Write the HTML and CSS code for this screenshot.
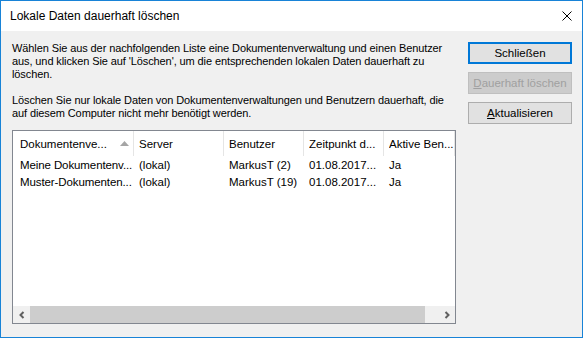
FILE: index.html
```html
<!doctype html>
<html lang="de">
  <head>
    <meta charset="UTF-8" />
    <title>Lokale Daten dauerhaft löschen</title>
    <link rel="stylesheet" href="styles.css">
  </head>
  <body>
    <div class="window">
      <div class="titlebar">
        <span class="title">Lokale Daten dauerhaft löschen</span>
        <button class="close" aria-label="Schließen">
          <svg width="10" height="10" viewBox="0 0 10 10">
            <path d="M0.5 0.5 L9.5 9.5 M9.5 0.5 L0.5 9.5" stroke="#000" stroke-width="1" fill="none" />
          </svg>
        </button>
      </div>

      <div class="content">
        <div class="main">
          <p class="intro">
            Wählen Sie aus der nachfolgenden Liste eine Dokumentenverwaltung und einen Benutzer<br>
            aus, und klicken Sie auf 'Löschen', um die entsprechenden lokalen Daten dauerhaft zu<br>
            löschen.
          </p>
          <p class="intro">
            Löschen Sie nur lokale Daten von Dokumentenverwaltungen und Benutzern dauerhaft, die<br>
            auf diesem Computer nicht mehr benötigt werden.
          </p>

          <div class="listview">
            <div class="grid">
              <!-- column titles are shown clipped, as the list view draws them -->
              <div class="head sorted" title="Dokumentenverwaltung">
                <span class="cell-text">Dokumentenve...</span>
                <svg class="sort-arrow" width="9" height="5" viewBox="0 0 9 5">
                  <path d="M0 5 L4.5 0 L9 5 Z" fill="#a5a5a5" />
                </svg>
              </div>
              <div class="head"><span class="cell-text">Server</span></div>
              <div class="head"><span class="cell-text">Benutzer</span></div>
              <div class="head" title="Zeitpunkt der letzten Verwendung"><span class="cell-text">Zeitpunkt d...</span></div>
              <div class="head" title="Aktive Benutzer"><span class="cell-text">Aktive Ben...</span></div>

              <div class="cell"><span class="cell-text">Meine Dokumentenv...</span></div>
              <div class="cell"><span class="cell-text">(lokal)</span></div>
              <div class="cell"><span class="cell-text">MarkusT (2)</span></div>
              <div class="cell"><span class="cell-text">01.08.2017...</span></div>
              <div class="cell"><span class="cell-text">Ja</span></div>

              <div class="cell"><span class="cell-text">Muster-Dokumenten...</span></div>
              <div class="cell"><span class="cell-text">(lokal)</span></div>
              <div class="cell"><span class="cell-text">MarkusT (19)</span></div>
              <div class="cell"><span class="cell-text">01.08.2017...</span></div>
              <div class="cell"><span class="cell-text">Ja</span></div>
            </div>

            <div class="hscroll">
              <span class="arrow">
                <svg width="8" height="8" viewBox="0 0 8 8">
                  <path d="M5.5 1 L2.5 4 L5.5 7" stroke="#606060" stroke-width="2" fill="none" />
                </svg>
              </span>
              <span class="track"><span class="thumb"></span></span>
              <span class="arrow">
                <svg width="8" height="8" viewBox="0 0 8 8">
                  <path d="M2.5 1 L5.5 4 L2.5 7" stroke="#606060" stroke-width="2" fill="none" />
                </svg>
              </span>
            </div>
          </div>
        </div>

        <div class="actions">
          <button class="btn btn-default">Schließen</button>
          <button class="btn" disabled><u>D</u>auerhaft löschen</button>
          <button class="btn"><u>A</u>ktualisieren</button>
        </div>
      </div>
    </div>
  </body>
</html>
```

FILE: styles.css
```css
/* Dialog colours - Windows 10 look */
:root {
  --accent: #1883d7;
  --face: #f0f0f0;
  --text: #000000;
  --btn-face: #e1e1e1;
  --btn-border: #adadad;
  --list-border: #828790;
}

body {
  margin: 0;
  background: #ffffff;
  font-family: "Liberation Sans", Arial, sans-serif;
  font-size: 11.5px;
  color: var(--text);
}

/* Window frame */
.window {
  width: 583px;
  height: 338px;
  box-sizing: border-box;
  border: 1px solid var(--accent);
  background: var(--face);
  display: flex;
  flex-direction: column;
}

.titlebar {
  height: 30px;
  background: #ffffff;
  display: flex;
  align-items: center;
  justify-content: space-between;
}

.title {
  padding-left: 9px;
  font-size: 12px;
}

.close {
  width: 31px;
  height: 30px;
  border: 0;
  padding: 0;
  background: transparent;
  display: flex;
  align-items: center;
  justify-content: center;
}

/* Dialog body */
.content {
  flex: 1;
  display: flex;
  padding: 11px 10px 13px 11px;
  gap: 12px;
  min-height: 0;
}

.main {
  width: 444px;
  display: flex;
  flex-direction: column;
}

.intro {
  margin: 0 0 13px 0;
  font-size: 11px;
  line-height: 13px;
  letter-spacing: -0.1px;
  white-space: nowrap;
}

.intro + .intro {
  margin-bottom: 10px;
}

/* List view */
.listview {
  flex: 1;
  border: 1px solid var(--list-border);
  background: #ffffff;
  display: flex;
  flex-direction: column;
  overflow: hidden;
}

.grid {
  flex: 1;
  display: grid;
  grid-template-columns: 121px 90px 80px 80px 71px;
  grid-auto-rows: 17px;
  grid-template-rows: 25px;
  align-content: start;
}

.head,
.cell {
  display: flex;
  align-items: center;
  padding-left: 5px;
  min-width: 0;
  white-space: nowrap;
}

.head {
  border-right: 1px solid #e5e5e5;
  overflow: hidden;
}

.head:last-child {
  border-right: 0;
}

.head.sorted {
  padding-left: 7px;
  padding-right: 4px;
}

.cell:nth-child(5n + 1) {
  padding-left: 7px;
  letter-spacing: -0.1px;
}

.cell-text {
  flex: 1;
  min-width: 0;
}

.head .cell-text {
  overflow: hidden;
}

.sort-arrow {
  flex: none;
  margin-left: 6px;
}

/* Horizontal scroll bar */
.hscroll {
  height: 17px;
  display: flex;
  background: var(--face);
}

.hscroll .arrow {
  width: 17px;
  display: flex;
  align-items: center;
  justify-content: center;
}

.hscroll .track {
  flex: 1;
  display: flex;
}

.hscroll .thumb {
  width: 395px;
  background: #cdcdcd;
}

/* Buttons */
.actions {
  display: flex;
  flex-direction: column;
  gap: 8px;
}

.btn {
  width: 104px;
  height: 22px;
  box-sizing: border-box;
  border: 1px solid var(--btn-border);
  background: var(--btn-face);
  font-family: inherit;
  font-size: 11.5px;
  color: var(--text);
  padding: 0;
}

.btn-default {
  border: 2px solid #0078d7;
}

.btn:disabled {
  background: #cccccc;
  border-color: #bfbfbf;
  color: #a0a0a0;
}
```
